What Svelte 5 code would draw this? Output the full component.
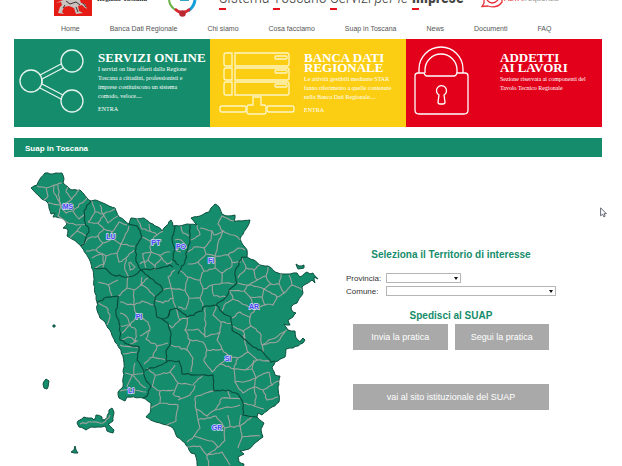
<script>
  const nav = ['Home', 'Banca Dati Regionale', 'Chi siamo', 'Cosa facciamo', 'Suap in Toscana', 'News', 'Documenti', 'FAQ'];

  function crinkle(line, amount = 0.8) {
    const pts = line.split(' ').map((p) => p.split(',').map(Number));
    let seed = pts[0][0] * 31 + pts[0][1] * 17;
    const rand = () => {
      seed = (seed * 9301 + 49297) % 233280;
      return seed / 233280 - 0.5;
    };
    let d = `M${pts[0][0]} ${pts[0][1]}`;
    for (let i = 1; i < pts.length; i++) {
      const [x0, y0] = pts[i - 1];
      const [x1, y1] = pts[i];
      const n = Math.max(1, Math.round(Math.hypot(x1 - x0, y1 - y0) / 3));
      for (let k = 1; k <= n; k++) {
        const j = k < n ? amount * 2 : 0;
        const x = x0 + ((x1 - x0) * k) / n + rand() * j;
        const y = y0 + ((y1 - y0) * k) / n + rand() * j;
        d += `L${x.toFixed(1)} ${y.toFixed(1)}`;
      }
    }
    return d;
  }

  const land = [
    '31,188 34,186 37,185 40,179 45,173 50,174 56,173 62,173 64,179 63,183 68,187 72,190 80,190 87,198 91,201 95,200 103,203 109,206 115,208 119,217 125,221 129,224 131,218 137,219 144,218 150,223 158,227 162,231 166,226 171,220 173,226 179,226 187,224 197,225 191,218 200,216 209,212 211,208 215,204 219,207 222,214 228,216 235,215 234,221 242,221 250,220 246,229 240,239 243,245 247,250 247,257 254,260 260,265 268,266 275,272 283,274 290,274 297,273 300,277 307,272 310,274 313,273 318,279 314,277 315,283 312,280 306,284 302,287 303,293 297,303 291,307 293,312 296,313 293,317 288,320 290,325 284,324 288,330 295,331 296,338 300,342 303,338 305,340 303,343 293,348 286,349 285,357 275,362 272,367 275,375 280,376 278,387 279,402 272,407 267,411 262,415 258,413 257,417 264,423 261,430 263,437 255,443 249,449 240,451 244,454 238,457 239,462 244,464 243,470 197,470 197,461 195,454 191,453 188,447 185,443 177,437 173,428 167,425 160,423 153,421 146,417 150,413 151,403 143,398 127,397 125,401 119,398 118,392 123,387 124,363 121,350 115,342 110,330 105,322 100,318 97,310 97,302 95,293 93,270 88,257 80,245 72,239 67,236 68,230 63,228 67,224 62,218 53,217 55,213 51,214 48,203 44,200 40,197 33,190 31,188',
    '296,264 299,266 304,265 304,268 298,269 296,264',
    '53,325 55,325 55,327 53,327 53,325',
    '46,379 49,381 47,389 44,388 43,384 46,379',
    '78,421 84,417 92,418 94,420 96,415 102,417 102,420 107,418 109,410 112,408 114,413 113,421 108,424 114,430 113,433 107,431 105,426 98,427 91,427 86,430 79,427 77,423 78,421',
    '75,446 76,450 78,453 71,452 74,450 75,446'
  ];

  const provinces = [
    '91,201 84,211 85,222 89,229 86,237 84,244 81,246',
    '129,224 137,226 142,237 136,246 136,261 141,270',
    '94,268 104,268 113,275 128,277 135,275 141,270 156,269 170,265 173,267',
    '175,226 172,240 175,249 173,260 179,265',
    '190,225 190,240 187,251 185,262 178,274',
    '141,270 150,278 158,284 163,290 155,297 154,305 157,317 162,319',
    '97,303 107,297 118,296',
    '118,296 116,313 120,326 120,340 130,345 139,347 137,360 144,371 145,378 151,386 147,396 143,398',
    '162,319 168,323 171,335 170,345 166,351 167,362 158,366 145,370',
    '168,317 170,310 176,308 187,317 202,311 203,307 216,305 226,297 229,290 237,283 235,272 242,257 247,257',
    '162,319 168,317 170,310',
    '216,305 222,312 231,317 232,330 242,337 253,347 263,352 271,362 275,361',
    '167,361 179,361 182,374 200,375 213,375 214,391 228,390 238,394 243,403 243,415 257,417'
  ];

  const towns = [
    '37,186 46,188 54,185 62,183', '46,188 48,196 44,200', '54,185 54,193 61,206 72,199 79,190', '58,185 60,204', '48,203 60,205 66,213 73,211 87,198', '61,206 58,216 66,222', '72,199 66,192 68,187', '73,211 79,219 85,214', '66,222 76,225 86,224', '70,238 77,231 81,226', '77,231 87,236',
    '92,201 95,212 88,222', '95,212 104,214 115,209', '100,205 103,214 108,223 118,216', '88,222 98,223 104,229 98,236 89,238', '104,214 98,223', '104,229 112,232 119,222 127,225', '98,236 103,243 112,239 112,232', '89,238 82,246', '103,243 96,250 86,251', '112,239 121,244 129,226', '96,250 106,256 117,253 121,244', '92,258 102,254 104,264 94,268', '106,256 103,268', '117,253 119,262 126,258 134,250', '126,258 125,270 129,277', '121,244 135,246', '130,262 135,267 130,270 129,262',
    '137,219 142,229 150,231 149,224', '150,231 157,235 163,231', '142,237 150,241 151,252 142,254', '150,241 157,235', '151,252 159,255 170,252', '151,252 148,260 140,264', '148,260 155,266 162,258 159,255', '155,266 155,270', '162,258 167,264 172,261', '143,254 146,268',
    '181,226 183,233 189,236', '175,240 181,240 187,248', '175,249 181,252',
    '197,225 200,235 190,240', '200,228 212,231 211,240 204,248 206,254 215,256', '234,221 222,216 218,224 223,231 214,235 212,231', '223,231 236,236 240,240', '215,256 218,243 223,231', '204,248 194,247 188,252', '215,256 228,255 238,248 245,250', '228,255 232,262 241,262', '206,254 198,262 188,264', '198,262 204,271 215,268 215,256', '215,268 222,273 232,266 232,262', '222,273 222,283 234,284', '204,271 200,280 188,277 179,270', '200,280 203,289 212,285 222,283', '212,285 214,296 226,297', '188,277 185,290 171,288 163,290', '185,290 189,298 200,298 203,289', '189,298 186,309 178,307', '200,298 203,307', '171,288 168,277 175,270', '171,288 173,298 163,303 155,300', '173,298 176,308',
    '242,258 246,268 238,278', '246,268 254,270 260,265', '254,270 257,280 249,285 236,283', '257,280 266,276 268,267', '266,276 271,284 264,289 249,285', '249,285 244,291 229,290', '264,289 262,297 250,297 244,291', '262,297 265,305 255,309 250,297', '271,284 279,284 284,293 277,297 270,292 264,289', '279,284 281,274', '289,275 292,285 302,290', '292,285 284,293', '277,297 273,305 265,305', '229,290 233,299 246,305 255,309', '233,299 226,303 222,311', '255,309 250,317 240,312 232,318', '250,317 251,326 260,333 262,345', '251,326 243,331 232,326', '243,331 245,339', '262,345 272,339 287,330', '262,345 277,342 285,332', '262,345 263,352',
    '98,302 106,307 110,315 107,325', '120,313 126,316 130,325 122,333', '120,326 130,325 137,316 134,305 120,302', '134,305 142,301 154,305', '128,277 127,288 118,296', '127,288 134,290 142,285 142,277', '134,290 134,305', '142,285 150,292 155,297', '137,316 148,322 150,330 140,336', '130,325 136,330 135,343', '122,340 128,337 137,341 130,344', '120,345 138,348', '123,354 137,352', '150,330 146,339 157,346 168,343', '157,346 153,357 144,364', '153,357 165,360', '127,387 132,375 140,384 146,388', '125,373 132,375 144,373', '135,363 134,375', '120,391 130,388 146,392', '140,285 148,278', '108,285 98,282', '108,285 112,296', '108,285 118,280',
    '176,308 180,320 188,317', '180,320 172,328 168,325', '188,317 185,330 198,329 205,337 205,308', '205,337 220,332 221,322 213,315 216,306', '221,322 232,323', '185,330 190,340 187,350 171,345', '190,340 203,342 207,350 222,349 217,340 220,332', '187,350 193,358 191,372', '207,350 204,361 212,372', '222,349 229,356 220,364 212,372', '229,356 238,358 248,352 243,335', '238,358 234,369 245,370 257,360 248,352', '220,364 234,369', '257,360 270,361', '252,369 256,378 269,372', '245,370 252,369 254,360', '234,369 235,382 244,382 256,378', '235,382 243,393 254,387 256,378', '254,387 263,390 272,385 269,372', '263,390 267,400 278,397', '243,403 254,406 264,409', '254,387 256,398 254,406', '272,385 279,381',
    '147,368 155,375 170,372 175,365', '170,372 178,383 173,394 181,399', '155,375 152,386', '152,386 160,391 160,403 178,405 176,421 167,425', '160,391 174,390', '151,408 160,403', '178,383 193,385 203,375', '178,400 190,395 195,385', '195,397 206,393 215,391', '195,397 196,409 207,416 215,410 240,405', '215,410 222,398 240,399', '196,409 198,420 216,416', '228,390 230,399', '198,420 200,428 194,436 187,442', '216,416 225,428 225,440 215,450 207,455', '225,428 240,426 241,415', '240,426 242,437 260,436', '242,437 238,448', '187,447 200,446 207,455 209,468', '207,455 222,452 230,465', '194,436 212,441 218,447', '228,415 230,427', '240,426 252,417',
    '80,424 92,422 103,423 110,415'
  ];

  const labels = [
    ['MS', 68, 209], ['LU', 111, 239], ['PT', 156, 245], ['PO', 181, 249], ['FI', 211, 263], ['AR', 254, 309],
    ['PI', 139, 319], ['LI', 131, 393], ['SI', 228, 361], ['GR', 217, 430]
  ];
</script>

<div class="page">
  <header>
    <svg class="crest" viewBox="0 0 38 16" aria-hidden="true">
      <path fill="#e51b16" d="M0 0h38v16H0z" />
      <path fill="#c9c2bf" d="M9 0h17l1 3 4 1 2 5-3-2-2-2-4 1 1 5 4 2-7 1-2-6-5-2-5 1-2 5 2 2-6-1 2-6 2-2-1-3-5 1z" />
      <path fill="none" stroke="#403232" d="m12 1 4 3 6-2 4 3M9 8l2-3M22 7l2 5M29 3l3 4" />
    </svg>
    <span class="region">Regione Toscana</span>
    <svg class="ring" viewBox="0 0 32 17" aria-hidden="true">
      <path fill="none" stroke="#69b345" stroke-width="2" d="M2 0Q3 7 9 10" />
      <path fill="none" stroke="#159fda" stroke-width="3" d="M28 0Q27 7 21 11" />
      <path fill="none" stroke="#db2730" stroke-width="2.5" d="M8 9q7 7 15 0" />
      <circle cx="15.500" cy="13.500" r="3.300" fill="#ba2832" />
      <path stroke="#36a3c8" d="M13 .5h9" />
    </svg>
    <h1><b class="i">S</b>istema <b class="i">T</b>oscano <b class="i">S</b>ervizi <em>per le</em> <strong><b class="i">I</b>mprese</strong></h1>
    <svg class="chat" viewBox="0 0 23 8" aria-hidden="true">
      <path fill="none" stroke="#e8303a" stroke-width="1.300" d="M3 0v3L1 6.500 7 6q9 3 14-4V0M6 0q5 6 11 0" />
    </svg>
    <span class="help"><b>ALTA</b>frequenza</span>
  </header>

  <nav>
    {#each nav as item}<a href="#top">{item}</a>{/each}
  </nav>

  <section class="banners">
    <article class="green">
      <svg viewBox="0 0 84 88" aria-hidden="true">
        <g fill="none" stroke="#e6f3ee" stroke-width="1.300">
          <circle cx="58" cy="22" r="11" /><circle cx="58" cy="62" r="11" /><circle cx="17" cy="42" r="11" />
          <path d="m26 36 21-11M28 40l21-11M28 45l21 11M26 49l21 11M28 40v5" />
        </g>
      </svg>
      <div>
        <h2>SERVIZI ONLINE</h2>
        <p>I servizi on line offerti dalla Regione Toscana a cittadini, professionisti e imprese costituiscono un sistema comodo, veloce....</p>
        <a href="#servizi">ENTRA</a>
      </div>
    </article>
    <article class="yellow">
      <svg viewBox="0 0 94 88" aria-hidden="true">
        <g fill="none" stroke="#fff5c4" stroke-width="1.300">
          <path d="M25 14h52q2 0 2 2v9q0 2-2 2H25zM25 29h52q2 0 2 2v8q0 2-2 2H25zM25 43h52q2 0 2 2v9q0 2-2 2H25zM22 14h-6q-2 0-2 2v9q0 2 2 2h6zM22 29h-6q-2 0-2 2v8q0 2 2 2h6zM22 43h-6q-2 0-2 2v9q0 2 2 2h6z" />
          <rect x="65" y="17" width="12" height="3" rx="1" /><rect x="65" y="31" width="12" height="3" rx="1" /><rect x="65" y="45" width="12" height="3" rx="1" />
          <path d="M43 58h8v8h3q2 0 2 2v5q0 2-2 2H39q-2 0-2-2v-5q0-2 2-2h4z" />
          <rect x="10" y="67" width="26" height="6" rx="2" /><rect x="57" y="67" width="27" height="6" rx="2" />
        </g>
      </svg>
      <div>
        <h2>BANCA DATI REGIONALE</h2>
        <p>Le attività gestibili mediante STAR fanno riferimento a quelle contenute nella Banca Dati Regionale....</p>
        <a href="#banca">ENTRA</a>
      </div>
    </article>
    <article class="red">
      <svg viewBox="0 0 94 88" aria-hidden="true">
        <g fill="none" stroke="#fff" stroke-width="1.300">
          <path d="M13 34V30a22 22 0 0 1 44 0V34M19 34V31a16 16 0 0 1 32 0V34" />
          <path d="M12 34h6q1 3 3 3h27q2 0 3-3h8q3 0 3 3v34q0 4-4 4H13q-4 0-4-4V37q0-3 3-3z" />
          <path d="M33 56a5 5 0 1 1 5 0l1 7q0 2-2 2h-3q-2 0-2-2z" />
        </g>
      </svg>
      <div>
        <h2>ADDETTI<br />AI LAVORI</h2>
        <p>Sezione riservata ai componenti del Tavolo Tecnico Regionale</p>
      </div>
    </article>
  </section>

  <h2 class="bar">Suap in Toscana</h2>

  <main>
    <svg class="map" viewBox="14 157 332 309" role="img" aria-label="Mappa delle province della Toscana">
      {#each land as l}<path class="land" d={crinkle(l, 0.6)} />{/each}
      {#each towns as t}<path class="town" d={crinkle(t)} />{/each}
      {#each provinces as p}<path class="prov" d={crinkle(p)} />{/each}
      {#each labels as [name, x, y]}<text {x} {y}>{name}</text>{/each}
    </svg>
    <form>
      <h3>Seleziona il Territorio di interesse</h3>
      <div class="fields">
        <label for="prov">Provincia:</label>
        <span class="pick short"><select id="prov"><option></option></select></span>
        <label for="com">Comune:</label>
        <span class="pick"><select id="com"><option></option></select></span>
      </div>
      <h3>Spedisci al SUAP</h3>
      <div class="actions">
        <button type="button">Invia la pratica</button>
        <button type="button">Segui la pratica</button>
        <button type="button" class="wide">vai al sito istituzionale del SUAP</button>
      </div>
    </form>
  </main>

  <svg class="pointer" viewBox="0 0 7 11" aria-hidden="true">
    <path fill="#fff" stroke="#555968" stroke-width=".9" d="M.6.800v8l2-1.600 1.200 2.600 1.300-.6L4 6.700h2.400z" />
  </svg>
</div>

<style>
  :global(body) { margin: 0; background: #fff; }
  .page { position: relative; font-family: "Liberation Sans", Arial, sans-serif; color: #333; }
  h1, h2, h3, p { margin: 0; }

  header { display: flex; align-items: flex-start; height: 17px; padding-left: 54px; overflow: hidden; }
  header > * { flex: none; }
  .crest { width: 38px; height: 16px; }
  .region { width: 70px; margin: -5px 0 0 5px; font: bold 7px/8px "Liberation Serif", serif; white-space: nowrap; color: #222; }
  .ring { width: 32px; height: 17px; }
  h1 { width: 262px; margin: -14px 0 0 20px; font: 300 16px/24px "Roboto Condensed", "Open Sans Condensed", "Liberation Sans Narrow", sans-serif; color: #444; white-space: nowrap; }
  h1 strong { font-weight: 700; }
  .i { position: relative; font-weight: inherit; }
  .i::after { content: ""; position: absolute; left: 0; bottom: -3px; width: 7px; height: 2px; background: #e3141b; }
  .chat { width: 23px; height: 8px; }
  .help { margin: -5px 0 0; font-size: 8px; line-height: 8px; color: #999; }
  .help b { color: #e8303a; font-weight: normal; }

  nav { display: flex; gap: 30px; height: 22px; padding-left: 61px; font-size: 7px; line-height: 24px; white-space: nowrap; }
  nav a { color: #555; text-decoration: none; }

  .banners { display: grid; grid-template-columns: repeat(3, 1fr); margin: 0 20px 0 14px; height: 88px; color: #fff; font-family: "Liberation Serif", serif; }
  article { display: flex; min-width: 0; }
  article svg { flex: none; width: 94px; height: 88px; }
  .green svg { width: 84px; }
  article div { flex: 1; min-width: 0; padding-top: 14px; }
  article h2 { font-size: 13px; line-height: 10px; }
  .green h2 { white-space: nowrap; }
  article p { margin-top: 2px; padding-right: 4px; font-size: 6px; line-height: 9px; }
  .green p { padding-right: 16px; }
  article a { display: block; margin-top: 4px; font-size: 6px; line-height: 9px; color: #fff; text-decoration: none; }
  .green { background: #158c6b; }
  .yellow { background: #fbce13; }
  .red { background: #e3001a; }

  .bar { margin: 11px 20px 0 14px; padding: 2px 0 0 11px; font-size: 8px; line-height: 17px; color: #fff; background: #158c6b; }

  main { display: flex; align-items: flex-start; margin-left: 14px; }
  .map { flex: none; width: 332px; height: 309px; }
  .land { fill: #158c6b; stroke: #0d5140; stroke-width: 1; }
  .town { fill: none; stroke: #9da39d; stroke-width: 1.1; }
  .prov { fill: none; stroke: #0a4a3a; stroke-width: 1.1; }
  .map text { font: bold 7px "Liberation Sans", sans-serif; text-anchor: middle; fill: #4545ee; stroke: #d9dcff; stroke-width: 1.3; paint-order: stroke; }

  form { width: 210px; padding-top: 91px; }
  h3 { font-size: 10px; line-height: 14px; text-align: center; color: #158c6b; }
  .fields { display: grid; grid-template-columns: 40px 1fr; row-gap: 2px; margin: 11px 0 12px; font-size: 8px; line-height: 11px; }
  .pick { position: relative; height: 10px; }
  .short { width: 75px; }
  .pick::after { content: ""; position: absolute; right: 3px; top: 4px; border: 2px solid transparent; border-top: 3px solid #111; border-bottom: 0; pointer-events: none; }
  select { display: block; box-sizing: border-box; width: 100%; height: 10px; padding: 0; border: 1px solid #b5b5b5; border-radius: 0; background: #fff; appearance: none; font-size: 8px; }
  .actions { display: grid; grid-template-columns: 1fr 1fr; gap: 34px 7px; margin: 1px 7px 0; }
  button { height: 26px; padding: 0; border: 0; background: #a9a9a9; color: #fff; font: 9px "Liberation Sans", Arial, sans-serif; }
  .wide { grid-column: 1 / -1; }

  .pointer { position: absolute; left: 600px; top: 207px; width: 7px; height: 11px; }
</style>
